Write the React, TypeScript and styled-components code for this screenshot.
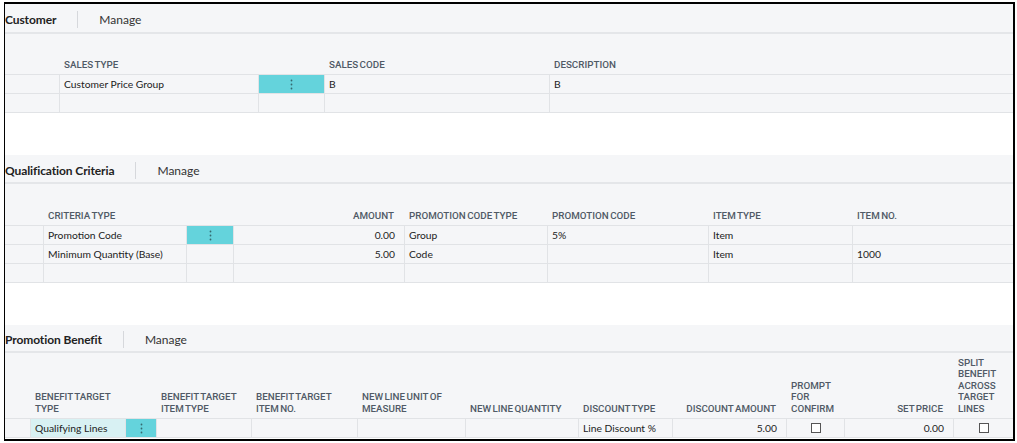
import styled, { createGlobalStyle } from "styled-components";

const GlobalStyle = createGlobalStyle`
  body {
    margin: 0;
    background: #ffffff;
    font-family: Lato, "Noto Sans", sans-serif;
  }
  * {
    box-sizing: border-box;
  }
`;

const gray = "#f5f6f8";
const line = "#e1e3e6";
const cyan = "#64d3dc";

const Frame = styled.div`
  margin: 2px 0 0 4px;
  width: 1011px;
  height: 439px;
  border: 2px solid #000;
  border-left-width: 1px;
  background: #fff;
  display: flex;
  flex-direction: column;
  gap: 42px;
  overflow: hidden;
`;

const Section = styled.section`
  background: ${gray};
`;

const Toolbar = styled.div<{ $h: number }>`
  display: flex;
  align-items: center;
  height: ${(p) => p.$h}px;
  border-bottom: 2px solid #e4e6e9;
  padding: 3px 0 0 0;
  font-size: 12px;
  color: #222;
`;

const Title = styled.span`
  font-weight: 700;
  letter-spacing: -0.1px;
`;

const Divider = styled.span`
  width: 1px;
  height: 17px;
  background: #d6d8dc;
  margin: 0 21px;
`;

const Manage = styled.span`
  color: #333;
`;

const Row = styled.div<{ $cols: string; $h: number; $head?: boolean }>`
  display: grid;
  grid-template-columns: ${(p) => p.$cols};
  height: ${(p) => p.$h}px;
  border-bottom: 1px solid ${line};
  align-items: ${(p) => (p.$head ? "end" : "stretch")};
  overflow: hidden;
`;

const HeadCell = styled.div<{ $right?: boolean }>`
  font-family: Roboto, "Liberation Sans", sans-serif;
  font-size: 9.8px;
  font-weight: 500;
  line-height: 11.5px;
  text-transform: uppercase;
  color: #505a66;
  padding: 0 ${(p) => (p.$right ? "11px" : "4px")} 4px 4px;
  text-align: ${(p) => (p.$right ? "right" : "left")};
  overflow: hidden;
  word-spacing: -1px;
`;

const Cell = styled.div<{ $right?: boolean; $tint?: string; $center?: boolean }>`
  display: flex;
  align-items: center;
  justify-content: ${(p) =>
    p.$center ? "center" : p.$right ? "flex-end" : "flex-start"};
  padding: 0 ${(p) => (p.$right ? "9px" : "4px")} 0 4px;
  border-right: 1px solid ${line};
  background: ${(p) => p.$tint ?? "transparent"};
  font-size: 10.3px;
  color: #222;
  white-space: nowrap;
  overflow: hidden;
  &:last-child {
    border-right: none;
  }
`;

const Check = styled.span`
  width: 10px;
  height: 10px;
  border: 1px solid #555;
  background: #fff;
`;

function Dots() {
  return (
    <svg width="3" height="11" viewBox="0 0 3 11">
      <circle cx="1.5" cy="1.5" r="0.9" fill="#356a70" />
      <circle cx="1.5" cy="5.5" r="0.9" fill="#356a70" />
      <circle cx="1.5" cy="9.5" r="0.9" fill="#356a70" />
    </svg>
  );
}

type Col = { head?: string; right?: boolean };
type Val = string | { menu: true } | { check: true } | { text: string; tint: string };

function Grid(props: {
  cols: string;
  columns: Col[];
  rows: Val[][];
  headH: number;
  rowH: number;
}) {
  return (
    <>
      <Row $cols={props.cols} $h={props.headH} $head>
        {props.columns.map((c, i) => (
          <HeadCell key={i} $right={c.right}>
            {c.head}
          </HeadCell>
        ))}
      </Row>
      {props.rows.map((r, ri) => (
        <Row key={ri} $cols={props.cols} $h={props.rowH}>
          {r.map((v, ci) => {
            const right = props.columns[ci].right;
            if (typeof v === "string")
              return (
                <Cell key={ci} $right={right}>
                  {v}
                </Cell>
              );
            if ("menu" in v)
              return (
                <Cell key={ci} $center $tint={cyan}>
                  <Dots />
                </Cell>
              );
            if ("check" in v)
              return (
                <Cell key={ci} $center>
                  <Check />
                </Cell>
              );
            return (
              <Cell key={ci} $tint={v.tint}>
                {v.text}
              </Cell>
            );
          })}
        </Row>
      ))}
    </>
  );
}

const menu = { menu: true } as const;
const check = { check: true } as const;

export default function App() {
  return (
    <>
      <GlobalStyle />
      <Frame>
        <Section>
          <Toolbar $h={30}>
            <Title>Customer</Title>
            <Divider />
            <Manage>Manage</Manage>
          </Toolbar>
          <Grid
            cols="55px 199px 66px 225px 1fr"
            headH={41}
            rowH={19}
            columns={[
              {},
              { head: "Sales Type" },
              {},
              { head: "Sales Code" },
              { head: "Description" },
            ]}
            rows={[
              ["", "Customer Price Group", menu, "B", "B"],
              ["", "", "", "", ""],
            ]}
          />
        </Section>

        <Section>
          <Toolbar $h={29}>
            <Title>Qualification Criteria</Title>
            <Divider />
            <Manage>Manage</Manage>
          </Toolbar>
          <Grid
            cols="39px 143px 47px 171px 143px 161px 144px 1fr"
            headH={42}
            rowH={19}
            columns={[
              {},
              { head: "Criteria Type" },
              {},
              { head: "Amount", right: true },
              { head: "Promotion Code Type" },
              { head: "Promotion Code" },
              { head: "Item Type" },
              { head: "Item No." },
            ]}
            rows={[
              ["", "Promotion Code", menu, "0.00", "Group", "5%", "Item", ""],
              ["", "Minimum Quantity (Base)", "", "5.00", "Code", "", "Item", "1000"],
              ["", "", "", "", "", "", "", ""],
            ]}
          />
        </Section>

        <Section>
          <Toolbar $h={28}>
            <Title>Promotion Benefit</Title>
            <Divider />
            <Manage>Manage</Manage>
          </Toolbar>
          <Grid
            cols="26px 95px 31px 95px 106px 108px 113px 94px 114px 58px 109px 1fr"
            headH={66}
            rowH={19}
            columns={[
              {},
              { head: "Benefit Target Type" },
              {},
              { head: "Benefit Target Item Type" },
              { head: "Benefit Target Item No." },
              { head: "New Line Unit of Measure" },
              { head: "New Line Quantity" },
              { head: "Discount Type" },
              { head: "Discount Amount", right: true },
              { head: "Prompt for Confirm" },
              { head: "Set Price", right: true },
              { head: "Split Benefit Across Target Lines" },
            ]}
            rows={[
              [
                "",
                { text: "Qualifying Lines", tint: "#d8f1f3" },
                menu,
                "",
                "",
                "",
                "",
                "Line Discount %",
                "5.00",
                check,
                "0.00",
                check,
              ],
            ]}
          />
        </Section>
      </Frame>
    </>
  );
}
